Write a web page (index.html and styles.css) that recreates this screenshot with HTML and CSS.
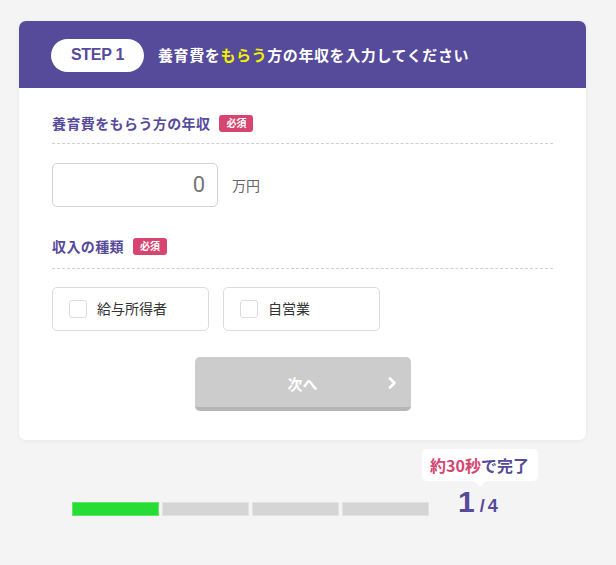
FILE: index.html
```html
<!DOCTYPE html>
<html lang="ja">
<head>
<meta charset="utf-8">
<link rel="stylesheet" href="styles.css">
</head>
<body>
<div class="card">
  <div class="card-head">
    <span class="step">STEP 1</span>
    <h1 class="title">養育費を<span class="hl">もらう</span>方の年収を入力してください</h1>
  </div>
  <div class="card-body">
    <div class="field-label"><span>養育費をもらう方の年収</span><span class="badge">必須</span></div>
    <div class="amount-row">
      <div class="amount-input">0</div>
      <span class="unit">万円</span>
    </div>
    <div class="field-label second"><span>収入の種類</span><span class="badge">必須</span></div>
    <div class="options">
      <label class="option"><span class="check"></span><span>給与所得者</span></label>
      <label class="option"><span class="check"></span><span>自営業</span></label>
    </div>
    <div class="btn-wrap">
      <div class="next-btn"><span>次へ</span>
        <svg class="chev" width="10" height="12" viewBox="0 0 10 12"><path d="M3 1.5 L7.5 6 L3 10.5" fill="none" stroke="#fff" stroke-width="2.6" stroke-linecap="round" stroke-linejoin="round"/></svg>
      </div>
    </div>
  </div>
</div>
<div class="progress">
  <div class="bar">
    <span class="seg done"></span>
    <span class="seg"></span>
    <span class="seg"></span>
    <span class="seg"></span>
  </div>
  <div class="counter">
    <div class="bubble"><span class="pink">約30秒</span>で完了</div>
    <span class="cur">1</span><span class="tot">/4</span>
  </div>
</div>
</body>
</html>
```
FILE: styles.css
```css
* { box-sizing: border-box; }
html, body { margin: 0; padding: 0; }
body {
  background: #f4f4f4;
  font-family: "Noto Sans CJK JP", "Noto Sans", sans-serif;
  width: 616px;
  height: 565px;
  padding-top: 21px;
}
.card {
  margin-left: 19px;
  width: 567px;
  background: #fff;
  border-radius: 7px;
  overflow: hidden;
  box-shadow: 0 1px 4px rgba(0,0,0,0.05);
}
.card-head {
  background: #564a9a;
  height: 67px;
  display: flex;
  align-items: center;
  padding-left: 32px;
  padding-top: 1px;
}
.step {
  width: 93px;
  height: 33px;
  border-radius: 17px;
  background: #fff;
  color: #564a9a;
  font-family: "Liberation Sans", Arial, sans-serif;
  font-weight: bold;
  font-size: 16px;
  letter-spacing: -0.3px;
  display: flex;
  align-items: center;
  justify-content: center;
}
.title {
  margin: 0 0 0 14px;
  color: #fff;
  font-size: 15px;
  font-weight: bold;
  letter-spacing: 0.6px;
  line-height: 20px;
}
.hl { color: #f4f000; }
.card-body {
  padding: 25px 33px 29px;
}
.field-label {
  display: flex;
  align-items: center;
  gap: 9px;
  height: 31px;
  padding-bottom: 10px;
  border-bottom: 1px dashed #cfcfcf;
  color: #564a9a;
  font-size: 14px;
  font-weight: bold;
  letter-spacing: 0.4px;
  line-height: 20px;
}
.field-label.second {
  margin-top: 29px;
  height: 33px;
  padding-bottom: 12px;
}
.badge {
  background: #d6456f;
  color: #fff;
  font-size: 10px;
  font-weight: bold;
  width: 34px;
  height: 17px;
  border-radius: 3px;
  display: flex;
  align-items: center;
  justify-content: center;
  letter-spacing: 0;
}
.amount-row {
  display: flex;
  align-items: center;
  gap: 14px;
  margin-top: 19px;
}
.amount-input {
  width: 166px;
  height: 44px;
  border: 1px solid #d2d2d2;
  border-radius: 5px;
  text-align: right;
  padding-right: 12px;
  font-family: Roboto, "Noto Sans", sans-serif;
  font-size: 22px;
  line-height: 42px;
  color: #777;
}
.unit {
  font-size: 14px;
  color: #666;
}
.options {
  display: flex;
  gap: 14px;
  margin-top: 18px;
}
.option {
  width: 157px;
  height: 44px;
  border: 1px solid #dcdcdc;
  border-radius: 5px;
  display: flex;
  align-items: center;
  padding-left: 16px;
  padding-bottom: 3px;
  gap: 10px;
  font-size: 14px;
  color: #333;
}
.check {
  width: 18px;
  height: 18px;
  border: 1px solid #dcdcdc;
  border-radius: 3px;
  background: #fff;
  margin-top: 3px;
}
.btn-wrap {
  display: flex;
  justify-content: center;
  margin-top: 26px;
}
.next-btn {
  position: relative;
  width: 216px;
  height: 54px;
  background: #cccccc;
  border-radius: 5px;
  border-bottom: 4px solid #b6b6b6;
  display: flex;
  align-items: center;
  justify-content: center;
  color: #fff;
  font-size: 15px;
  font-weight: bold;
  padding-top: 2px;
}
.chev {
  position: absolute;
  right: 14px;
  top: 20px;
}
.progress {
  display: flex;
  align-items: flex-end;
  padding-left: 72px;
  margin-top: 47px;
}
.bar {
  display: flex;
  gap: 3px;
  height: 14px;
}
.seg {
  width: 87px;
  height: 14px;
  background: #d5d5d5;
  border: 1px solid #e2e2e2;
}
.seg.done {
  background: #27dc35;
  border-color: #5fe66a;
}
.counter {
  position: relative;
  margin-left: 29px;
  width: 43px;
  color: #564a9a;
  font-family: "Liberation Sans", Arial, sans-serif;
  font-weight: bold;
  line-height: 1;
  margin-bottom: -1px;
  white-space: nowrap;
}
.cur { font-size: 30px; }
.tot { font-size: 18px; margin-left: 5px; letter-spacing: 3px; }
.bubble {
  position: absolute;
  left: 50%;
  transform: translateX(-50%);
  bottom: 36px;
  width: 116px;
  height: 32px;
  background: #fff;
  border-radius: 5px;
  display: flex;
  align-items: center;
  justify-content: center;
  font-family: "Noto Sans CJK JP", sans-serif;
  font-size: 16px;
  font-weight: bold;
  color: #564a9a;
  letter-spacing: 0;
}
.bubble::after {
  content: "";
  position: absolute;
  left: 50%;
  bottom: -6px;
  margin-left: -6px;
  border-left: 6px solid transparent;
  border-right: 6px solid transparent;
  border-top: 6px solid #fff;
}
.pink { color: #d6456f; }
```
